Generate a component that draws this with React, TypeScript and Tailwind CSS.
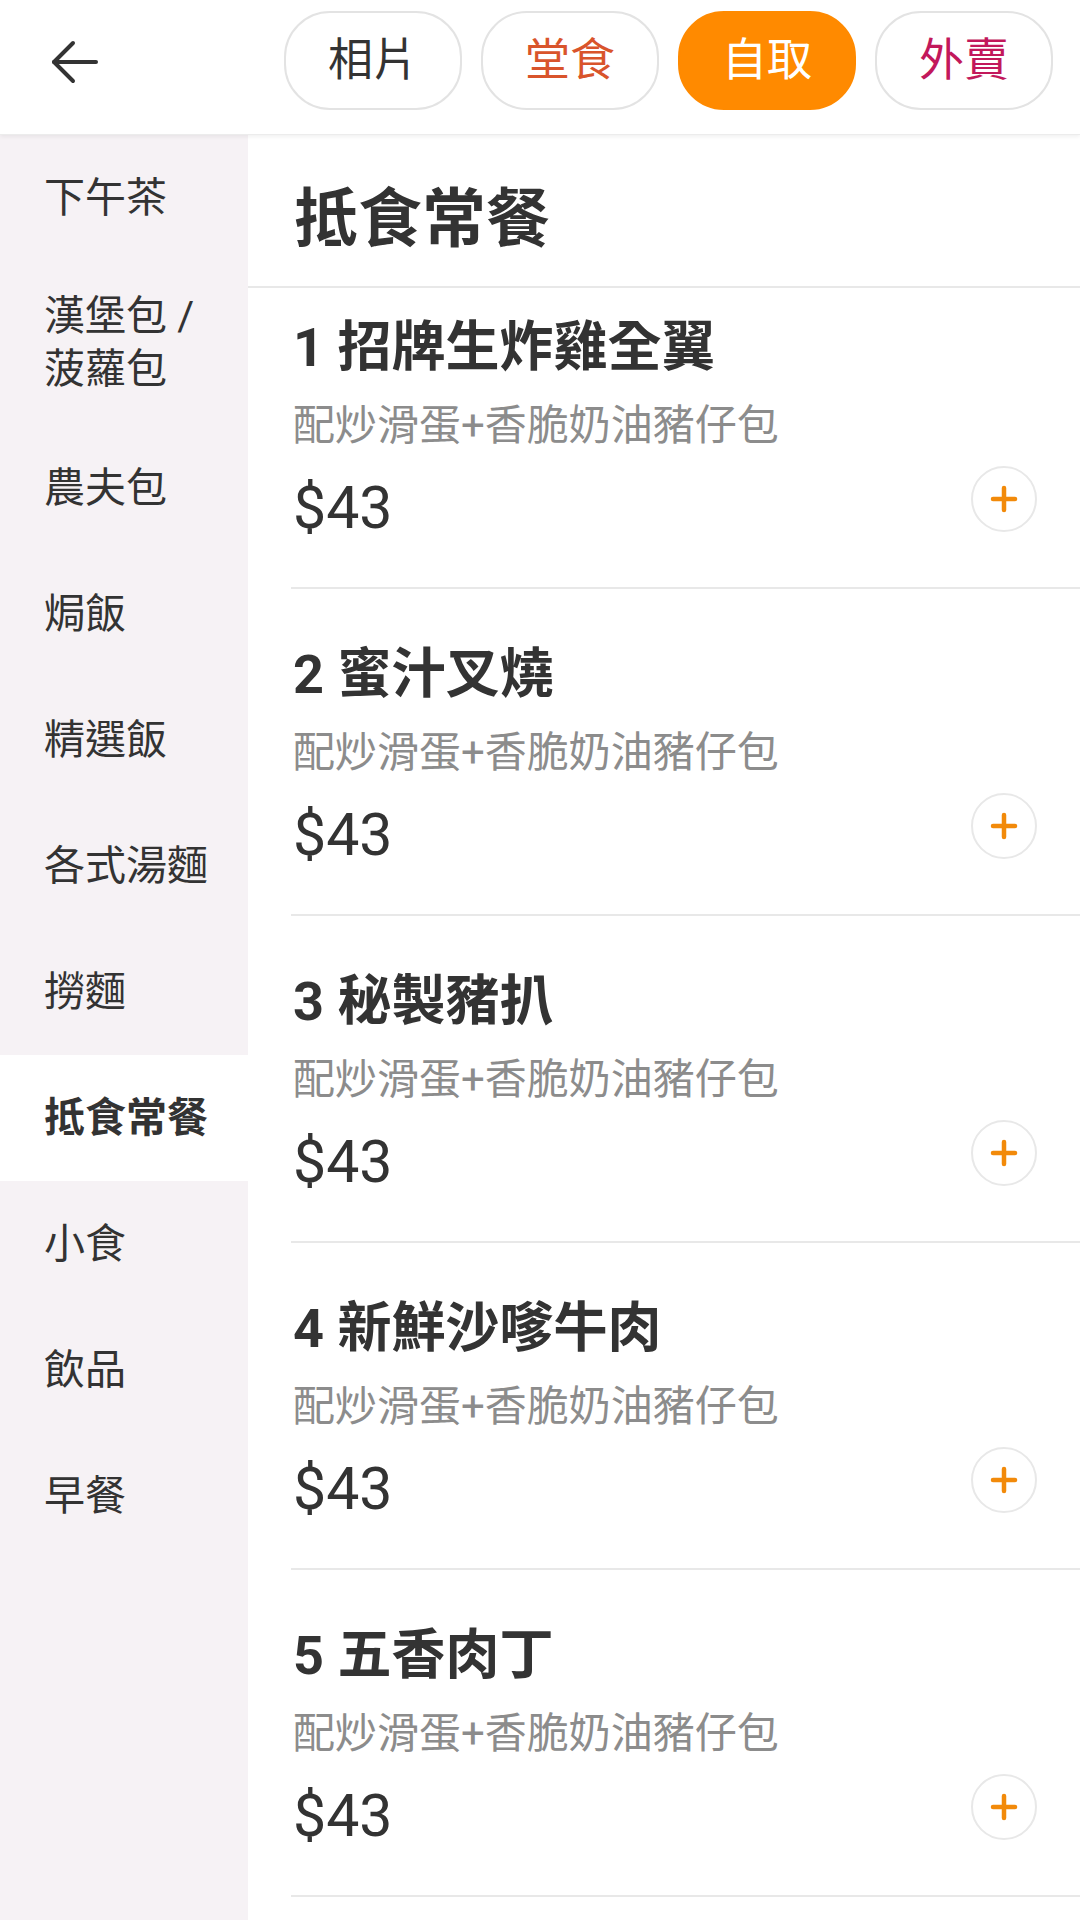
import React from 'react';

const categories = [
  { label: ['下午茶'] },
  { label: ['漢堡包 /', '菠蘿包'] },
  { label: ['農夫包'] },
  { label: ['焗飯'] },
  { label: ['精選飯'] },
  { label: ['各式湯麵'] },
  { label: ['撈麵'] },
  { label: ['抵食常餐'], active: true },
  { label: ['小食'] },
  { label: ['飲品'] },
  { label: ['早餐'] },
];

const items = [
  { name: '1 招牌生炸雞全翼' },
  { name: '2 蜜汁叉燒' },
  { name: '3 秘製豬扒' },
  { name: '4 新鮮沙嗲牛肉' },
  { name: '5 五香肉丁' },
];

const tabs = [
  { label: '相片', className: 'text-[#333333] border-[#e3e3e3] bg-white' },
  { label: '堂食', className: 'text-[#d9542b] border-[#e3e3e3] bg-white' },
  { label: '自取', className: 'text-white border-[#ff8a00] bg-[#ff8a00]' },
  { label: '外賣', className: 'text-[#c2185b] border-[#e3e3e3] bg-white' },
];

function BackArrow() {
  return (
    <svg width="48" height="44" viewBox="0 0 48 44" fill="none" stroke="#333333" strokeWidth="4" strokeLinecap="round" strokeLinejoin="round">
      <path d="M4 22H46" />
      <path d="M23 3L4 22l19 19" />
    </svg>
  );
}

function PlusButton() {
  return (
    <button className="w-[66px] h-[66px] rounded-full border-2 border-[#e8e8e8] bg-white flex items-center justify-center -mt-[9px] shrink-0">
      <svg width="28" height="28" viewBox="0 0 28 28" fill="none" stroke="#f28a0a" strokeWidth="4.5" strokeLinecap="round">
        <path d="M14 3v22" />
        <path d="M3 14h22" />
      </svg>
    </button>
  );
}

export default function App() {
  return (
    <div
      className="w-[1080px] h-[1920px] overflow-hidden bg-white flex flex-col text-[#333333]"
      style={{ fontFamily: "Roboto, 'Noto Sans CJK TC', 'Noto Sans CJK SC', sans-serif" }}
    >
      {/* Header */}
      <header className="h-[135px] shrink-0 flex items-start bg-white border-b border-[#ececec] shadow-[0_2px_4px_rgba(0,0,0,0.06)] relative z-10">
        <div className="pl-[50px] pt-[40px]">
          <BackArrow />
        </div>
        <div className="ml-auto flex gap-[19px] pr-[27px] pt-[11px]">
          {tabs.map((tab) => (
            <div
              key={tab.label}
              className={`w-[178px] h-[99px] rounded-[46px] border-2 flex items-center justify-center text-[45px] leading-none ${tab.className}`}
            >
              {tab.label}
            </div>
          ))}
        </div>
      </header>

      <div className="flex flex-1 min-h-0">
        {/* Sidebar */}
        <aside className="w-[248px] shrink-0 bg-[#f6f2f5] flex flex-col">
          {categories.map((cat) => (
            <div
              key={cat.label.join('')}
              className={`flex items-center pl-[44px] text-[41px] leading-[53px] ${
                cat.label.length > 1 ? 'h-[164px]' : 'h-[126px]'
              } ${cat.active ? 'bg-white font-bold' : ''}`}
            >
              <div>
                {cat.label.map((line) => (
                  <div key={line}>{line}</div>
                ))}
              </div>
            </div>
          ))}
        </aside>

        {/* Menu list */}
        <main className="flex-1 flex flex-col min-w-0">
          <div className="shrink-0 pt-[45px] pb-[26px] pl-[46px] border-b-2 border-[#e8e8e8]">
            <h2 className="text-[64px] leading-[80px] font-bold">抵食常餐</h2>
          </div>

          <div className="flex-1 overflow-hidden">
            <div className="-mt-[26px]">
              {items.map((item) => (
                <div key={item.name} className="ml-[43px] pl-[2px] pr-[43px] pt-[56px] pb-[46px] border-b-2 border-[#e8e8e8]">
                  <div className="text-[54px] leading-[60px] font-bold">{item.name}</div>
                  <div className="mt-[23px] text-[42px] leading-[50px] text-[#8c8c8c]">配炒滑蛋+香脆奶油豬仔包</div>
                  <div className="mt-[24px] flex items-start justify-between">
                    <div className="text-[59px] leading-[66px]">$43</div>
                    <PlusButton />
                  </div>
                </div>
              ))}
            </div>
          </div>
        </main>
      </div>
    </div>
  );
}
